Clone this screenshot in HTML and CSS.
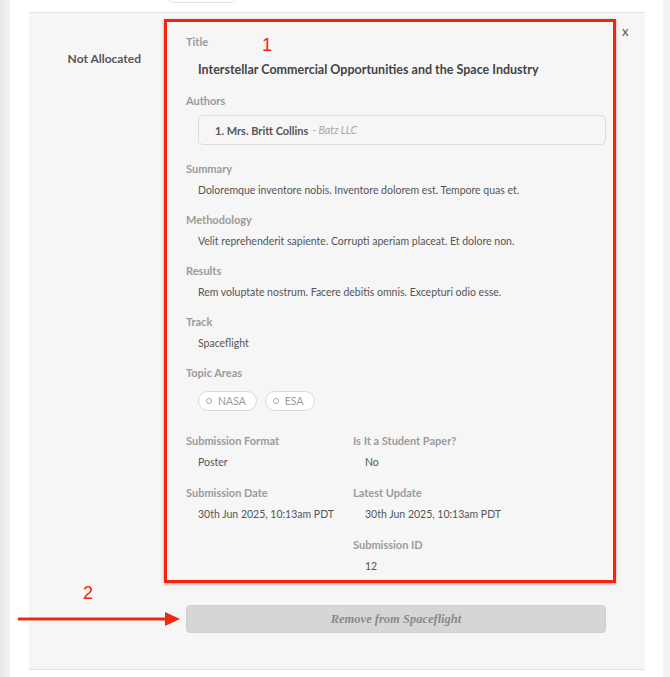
FILE: index.html
```html
<!DOCTYPE html>
<html lang="en">
<head>
    <meta charset="UTF-8">
    <meta name="viewport" content="width=device-width, initial-scale=1.0">
    <title>Submission Allocation</title>
    <link rel="stylesheet" href="styles.css">
</head>
<body>
    <div class="page">
        <div class="toolbar">
            <div class="toolbar-pill"></div>
        </div>
        <div class="panel">
            <div class="status">Not Allocated</div>
            <div class="main">
                <div class="details">
                    <span class="mark mark-1">1</span>
                    <div class="field field-title">
                        <div class="field-label">Title</div>
                        <div class="title-value">Interstellar Commercial Opportunities and the Space Industry</div>
                    </div>
                    <div class="field field-authors">
                        <div class="field-label">Authors</div>
                        <div class="author-box">
                            <span class="author-name">1. Mrs. Britt Collins</span>
                            <span class="author-org">- Batz LLC</span>
                        </div>
                    </div>
                    <div class="field">
                        <div class="field-label">Summary</div>
                        <div class="field-value">Doloremque inventore nobis. Inventore dolorem est. Tempore quas et.</div>
                    </div>
                    <div class="field">
                        <div class="field-label">Methodology</div>
                        <div class="field-value">Velit reprehenderit sapiente. Corrupti aperiam placeat. Et dolore non.</div>
                    </div>
                    <div class="field">
                        <div class="field-label">Results</div>
                        <div class="field-value">Rem voluptate nostrum. Facere debitis omnis. Excepturi odio esse.</div>
                    </div>
                    <div class="field">
                        <div class="field-label">Track</div>
                        <div class="field-value">Spaceflight</div>
                    </div>
                    <div class="field field-topics">
                        <div class="field-label">Topic Areas</div>
                        <div class="tags">
                            <span class="tag"><span class="tag-dot"></span>NASA</span>
                            <span class="tag"><span class="tag-dot"></span>ESA</span>
                        </div>
                    </div>
                    <div class="meta-grid">
                        <div class="field">
                            <div class="field-label">Submission Format</div>
                            <div class="field-value">Poster</div>
                        </div>
                        <div class="field">
                            <div class="field-label">Is It a Student Paper?</div>
                            <div class="field-value">No</div>
                        </div>
                        <div class="field">
                            <div class="field-label">Submission Date</div>
                            <div class="field-value">30th Jun 2025, 10:13am PDT</div>
                        </div>
                        <div class="field">
                            <div class="field-label">Latest Update</div>
                            <div class="field-value">30th Jun 2025, 10:13am PDT</div>
                        </div>
                        <div class="field"></div>
                        <div class="field field-last">
                            <div class="field-label">Submission ID</div>
                            <div class="field-value">12</div>
                        </div>
                    </div>
                </div>
                <button class="remove-btn" disabled>Remove from Spaceflight</button>
            </div>
            <div class="close">x</div>
        </div>

        <span class="mark mark-2">2</span>
        <svg class="arrow" width="165" height="16" viewBox="0 0 165 16">
            <line x1="0" y1="8" x2="150" y2="8" stroke="#ee2a12" stroke-width="3"/>
            <polygon points="147,1 162,8 147,15" fill="#ee2a12"/>
        </svg>
    </div>
</body>
</html>
```

FILE: styles.css
```css
:root {
    --red: #f2230f;
    --label-color: #9b9b9b;
    --text-color: #555555;
    --panel-bg: #f6f6f6;
    --line-color: #e3e3e3;
}
body {
    margin: 0;
    background: linear-gradient(to right, #e8e8e8, #f3f3f3 10px, #f3f3f3);
    font-family: Lato, 'Open Sans', Arial, sans-serif;
    color: var(--text-color);
}
.page {
    position: relative;
    margin: 0 7px 0 10px;
    height: 677px;
    background-color: #ffffff;
    padding: 0 18px 0 19px;
    overflow: hidden;
}
.toolbar {
    height: 12px;
    overflow: hidden;
}
.toolbar-pill {
    margin-left: 138px;
    margin-top: -18px;
    width: 68px;
    height: 19px;
    border: 1px solid #e2e2e2;
    border-radius: 6px;
    background: #ffffff;
}
.panel {
    display: flex;
    background-color: var(--panel-bg);
    border-top: 1px solid var(--line-color);
    border-bottom: 1px solid var(--line-color);
    padding: 6px 0 36px 0;
}
.status {
    width: 112px;
    text-align: right;
    font-size: 12px;
    font-weight: bold;
    color: #555;
    padding-top: 32px;
    line-height: 16px;
}
.main {
    margin-left: 23px;
    width: 452px;
}
.details {
    position: relative;
    border: 3px solid var(--red);
    box-shadow: 0 1px 3px rgba(0,0,0,0.35);
    padding: 12px 7px 6px 19px;
}
.field {
    margin-bottom: 14px;
}
.field-label {
    font-size: 11px;
    font-weight: bold;
    color: var(--label-color);
    line-height: 16px;
    margin-bottom: 5px;
}
.field-value {
    font-size: 10.5px;
    line-height: 16px;
    padding-left: 12px;
    color: var(--text-color);
}
.field-title .field-label {
    margin-bottom: 11px;
}
.title-value {
    font-size: 12.5px;
    font-weight: bold;
    line-height: 18px;
    color: #444;
    padding-left: 12px;
}
.field-authors {
    margin-bottom: 16px;
}
.field-authors .field-label {
    margin-bottom: 6px;
}
.author-box {
    margin-left: 12px;
    height: 28px;
    border: 1px solid #dcdcdc;
    border-radius: 5px;
    display: flex;
    align-items: center;
    padding-left: 16px;
    font-size: 10.5px;
}
.author-name {
    font-size: 11px;
    font-weight: bold;
    color: #555;
    margin-right: 4px;
}
.author-org {
    font-style: italic;
    color: #a5a5a5;
}
.field-topics {
    margin-bottom: 22px;
}
.field-topics .field-label {
    margin-bottom: 10px;
}
.tags {
    display: flex;
    gap: 8px;
    padding-left: 12px;
}
.tag {
    display: inline-flex;
    align-items: center;
    height: 18px;
    padding: 0 10px 0 7px;
    border: 1px solid #d9d9d9;
    border-radius: 10px;
    background: #ffffff;
    font-size: 10.5px;
    color: #9a9a9a;
}
.tag-dot {
    width: 4px;
    height: 4px;
    border: 1px solid #aaa;
    border-radius: 50%;
    margin-right: 6px;
}
.meta-grid {
    display: grid;
    grid-template-columns: 167px 1fr;
}
.meta-grid .field {
    margin-bottom: 15px;
}
.meta-grid .field-last {
    margin-bottom: 0;
}
.remove-btn {
    display: block;
    margin: 22px 10px 0 22px;
    width: 420px;
    height: 28px;
    background-color: #d6d6d6;
    border: 1px solid #d0d0d0;
    border-radius: 4px;
    font-family: 'Liberation Serif', 'Times New Roman', serif;
    font-style: italic;
    font-weight: bold;
    font-size: 12.5px;
    color: #8a8a8a;
}
.close {
    margin-left: 6px;
    padding-top: 4px;
    font-size: 13px;
    line-height: 16px;
    color: #555;
}
.mark {
    position: absolute;
    color: var(--red);
    font-family: 'Liberation Sans', Arial, sans-serif;
    font-size: 18px;
    line-height: 18px;
}
.mark-1 {
    left: 95px;
    top: 14px;
}
.mark-2 {
    left: 73px;
    top: 584px;
}
.arrow {
    position: absolute;
    left: 8px;
    top: 611px;
}
```
